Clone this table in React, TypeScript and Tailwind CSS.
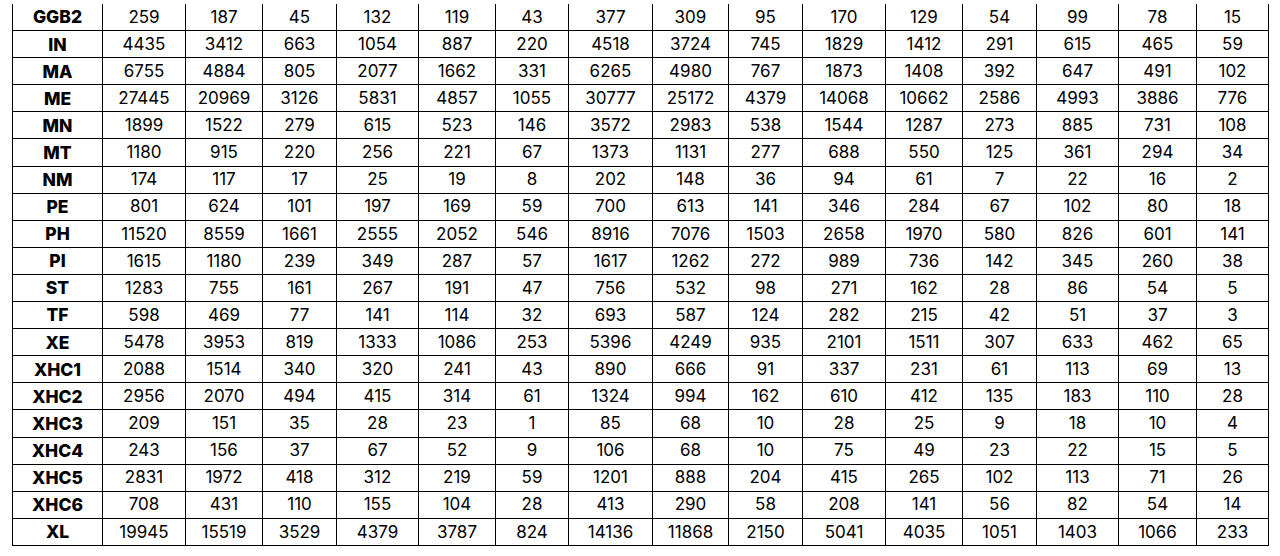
const widths = [90, 83, 77, 74, 82, 77, 73, 84, 76, 74, 83, 77, 74, 82, 78, 72];

const rows: [string, number[]][] = [
  ["GGB2", [259, 187, 45, 132, 119, 43, 377, 309, 95, 170, 129, 54, 99, 78, 15]],
  ["IN", [4435, 3412, 663, 1054, 887, 220, 4518, 3724, 745, 1829, 1412, 291, 615, 465, 59]],
  ["MA", [6755, 4884, 805, 2077, 1662, 331, 6265, 4980, 767, 1873, 1408, 392, 647, 491, 102]],
  ["ME", [27445, 20969, 3126, 5831, 4857, 1055, 30777, 25172, 4379, 14068, 10662, 2586, 4993, 3886, 776]],
  ["MN", [1899, 1522, 279, 615, 523, 146, 3572, 2983, 538, 1544, 1287, 273, 885, 731, 108]],
  ["MT", [1180, 915, 220, 256, 221, 67, 1373, 1131, 277, 688, 550, 125, 361, 294, 34]],
  ["NM", [174, 117, 17, 25, 19, 8, 202, 148, 36, 94, 61, 7, 22, 16, 2]],
  ["PE", [801, 624, 101, 197, 169, 59, 700, 613, 141, 346, 284, 67, 102, 80, 18]],
  ["PH", [11520, 8559, 1661, 2555, 2052, 546, 8916, 7076, 1503, 2658, 1970, 580, 826, 601, 141]],
  ["PI", [1615, 1180, 239, 349, 287, 57, 1617, 1262, 272, 989, 736, 142, 345, 260, 38]],
  ["ST", [1283, 755, 161, 267, 191, 47, 756, 532, 98, 271, 162, 28, 86, 54, 5]],
  ["TF", [598, 469, 77, 141, 114, 32, 693, 587, 124, 282, 215, 42, 51, 37, 3]],
  ["XE", [5478, 3953, 819, 1333, 1086, 253, 5396, 4249, 935, 2101, 1511, 307, 633, 462, 65]],
  ["XHC1", [2088, 1514, 340, 320, 241, 43, 890, 666, 91, 337, 231, 61, 113, 69, 13]],
  ["XHC2", [2956, 2070, 494, 415, 314, 61, 1324, 994, 162, 610, 412, 135, 183, 110, 28]],
  ["XHC3", [209, 151, 35, 28, 23, 1, 85, 68, 10, 28, 25, 9, 18, 10, 4]],
  ["XHC4", [243, 156, 37, 67, 52, 9, 106, 68, 10, 75, 49, 23, 22, 15, 5]],
  ["XHC5", [2831, 1972, 418, 312, 219, 59, 1201, 888, 204, 415, 265, 102, 113, 71, 26]],
  ["XHC6", [708, 431, 110, 155, 104, 28, 413, 290, 58, 208, 141, 56, 82, 54, 14]],
  ["XL", [19945, 15519, 3529, 4379, 3787, 824, 14136, 11868, 2150, 5041, 4035, 1051, 1403, 1066, 233]],
];

export default function App() {
  return (
    <div className="w-[1280px] h-[556px] bg-white overflow-hidden font-['Inter',sans-serif] text-[17px] text-black">
      <div className="ml-[12px] mt-[4px] w-[1257px] border-l border-black">
        {rows.map(([label, values]) => (
          <div key={label} className="flex h-[27.1px]">
            <div
              className="flex items-center justify-center border-r border-b border-black font-extrabold text-[17.5px] pt-px"
              style={{ width: widths[0] }}
            >
              {label}
            </div>
            {values.map((v, i) => (
              <div
                key={i}
                className="flex items-center justify-center border-r border-b border-black pt-px"
                style={{ width: widths[i + 1] }}
              >
                {v}
              </div>
            ))}
          </div>
        ))}
      </div>
    </div>
  );
}
